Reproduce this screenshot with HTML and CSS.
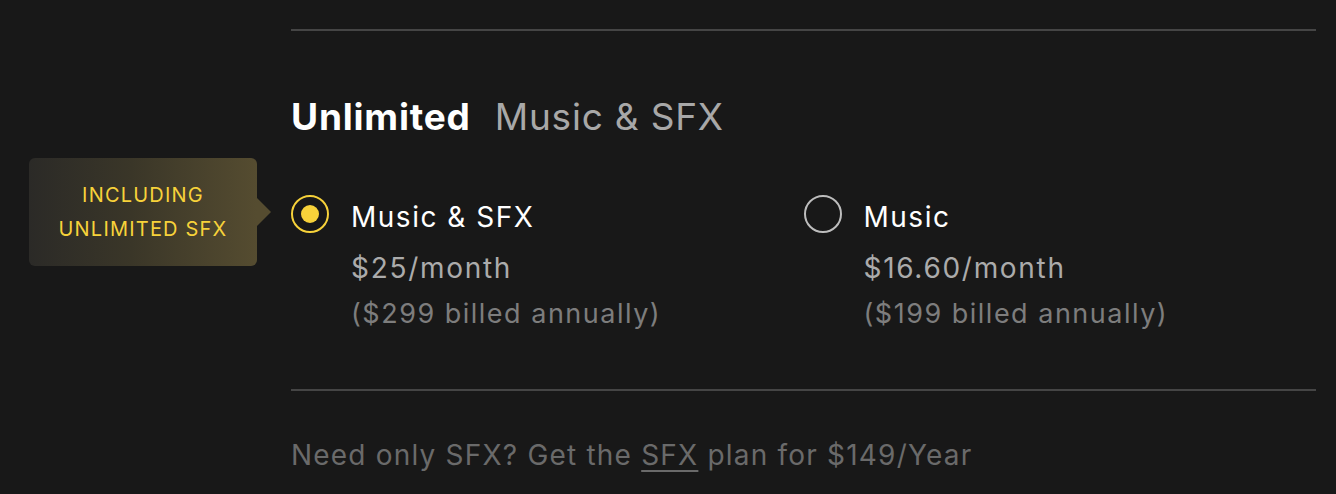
FILE: index.html
```html
<!DOCTYPE html>
<html lang="en">
<head>
<meta charset="utf-8">
<link rel="stylesheet" href="styles.css">
</head>
<body>
<div class="page">
  <aside class="side">
    <div class="badge">INCLUDING<br>UNLIMITED SFX</div>
  </aside>
  <main class="main">
    <hr class="rule top">
    <h2 class="title"><strong>Unlimited</strong><span>Music &amp; SFX</span></h2>
    <div class="options">
      <label class="option">
        <span class="radio checked"><span class="dot"></span></span>
        <span class="info">
          <span class="name">Music &amp; SFX</span>
          <span class="price">$25/month</span>
          <span class="billed">($299 billed annually)</span>
        </span>
      </label>
      <label class="option">
        <span class="radio"></span>
        <span class="info">
          <span class="name">Music</span>
          <span class="price">$16.60/month</span>
          <span class="billed">($199 billed annually)</span>
        </span>
      </label>
    </div>
    <hr class="rule bottom">
    <p class="note">Need only SFX? Get the <a href="#">SFX</a> plan for $149/Year</p>
  </main>
</div>
</body>
</html>
```

FILE: styles.css
```css
* { box-sizing: border-box; }
html, body { margin: 0; padding: 0; }
body {
  background: #181818;
  font-family: Inter, "Noto Sans", sans-serif;
  color: #fff;
  width: 1336px;
  height: 494px;
  overflow: hidden;
}
.page {
  display: flex;
  padding-left: 29px;
}
.side {
  width: 262px;
  padding-top: 158px;
}
.badge {
  position: relative;
  width: 228px;
  height: 108px;
  border-radius: 6px;
  background: linear-gradient(90deg, #2b2a27 0%, #3a3628 45%, #554c30 100%);
  color: #f7d23a;
  font-size: 20px;
  line-height: 34px;
  text-align: center;
  display: flex;
  align-items: center;
  justify-content: center;
  letter-spacing: 1.2px;
}
.badge::after {
  content: "";
  position: absolute;
  right: -14px;
  top: 40px;
  border-style: solid;
  border-width: 14px 0 14px 14px;
  border-color: transparent transparent transparent #554c30;
}
.main {
  width: 1025px;
}
.rule {
  border: 0;
  height: 2px;
  background: #454545;
  margin: 0;
}
.rule.top { margin-top: 29px; }
.title {
  margin: 61px 0 0;
  font-size: 37px;
  line-height: 50px;
  font-weight: 400;
  display: flex;
  gap: 24px;
  letter-spacing: 0.8px;
}
.title strong { font-weight: 700; color: #fff; }
.title span { color: #a8a8a8; font-weight: 400; }
.options {
  display: flex;
  margin-top: 51px;
}
.option {
  display: flex;
  gap: 22px;
  width: 513px;
}
.radio {
  width: 38px;
  height: 38px;
  border-radius: 50%;
  border: 2px solid #bdbdbd;
  display: flex;
  align-items: center;
  justify-content: center;
  flex: none;
  margin-top: 2px;
}
.radio.checked { border-color: #f7d23a; }
.dot {
  width: 18px;
  height: 18px;
  border-radius: 50%;
  background: #f7d23a;
}
.info {
  display: flex;
  flex-direction: column;
  padding-top: 4px;
}
.name { font-size: 28px; line-height: 40px; color: #fff; letter-spacing: 1.5px; }
.price { font-size: 28px; line-height: 50px; color: #ababab; margin-top: 6px; letter-spacing: 1.7px; }
.billed { font-size: 27px; line-height: 40px; color: #7d7d7d; letter-spacing: 1.5px; margin-top: 1px; }
.rule.bottom { margin-top: 55px; }
.note {
  margin: 44px 0 0;
  font-size: 28px;
  line-height: 40px;
  color: #6a6a6a;
  letter-spacing: 1.2px;
}
.note a { color: #6a6a6a; text-decoration: underline; text-underline-offset: 5px; text-decoration-thickness: 2px; }
```
